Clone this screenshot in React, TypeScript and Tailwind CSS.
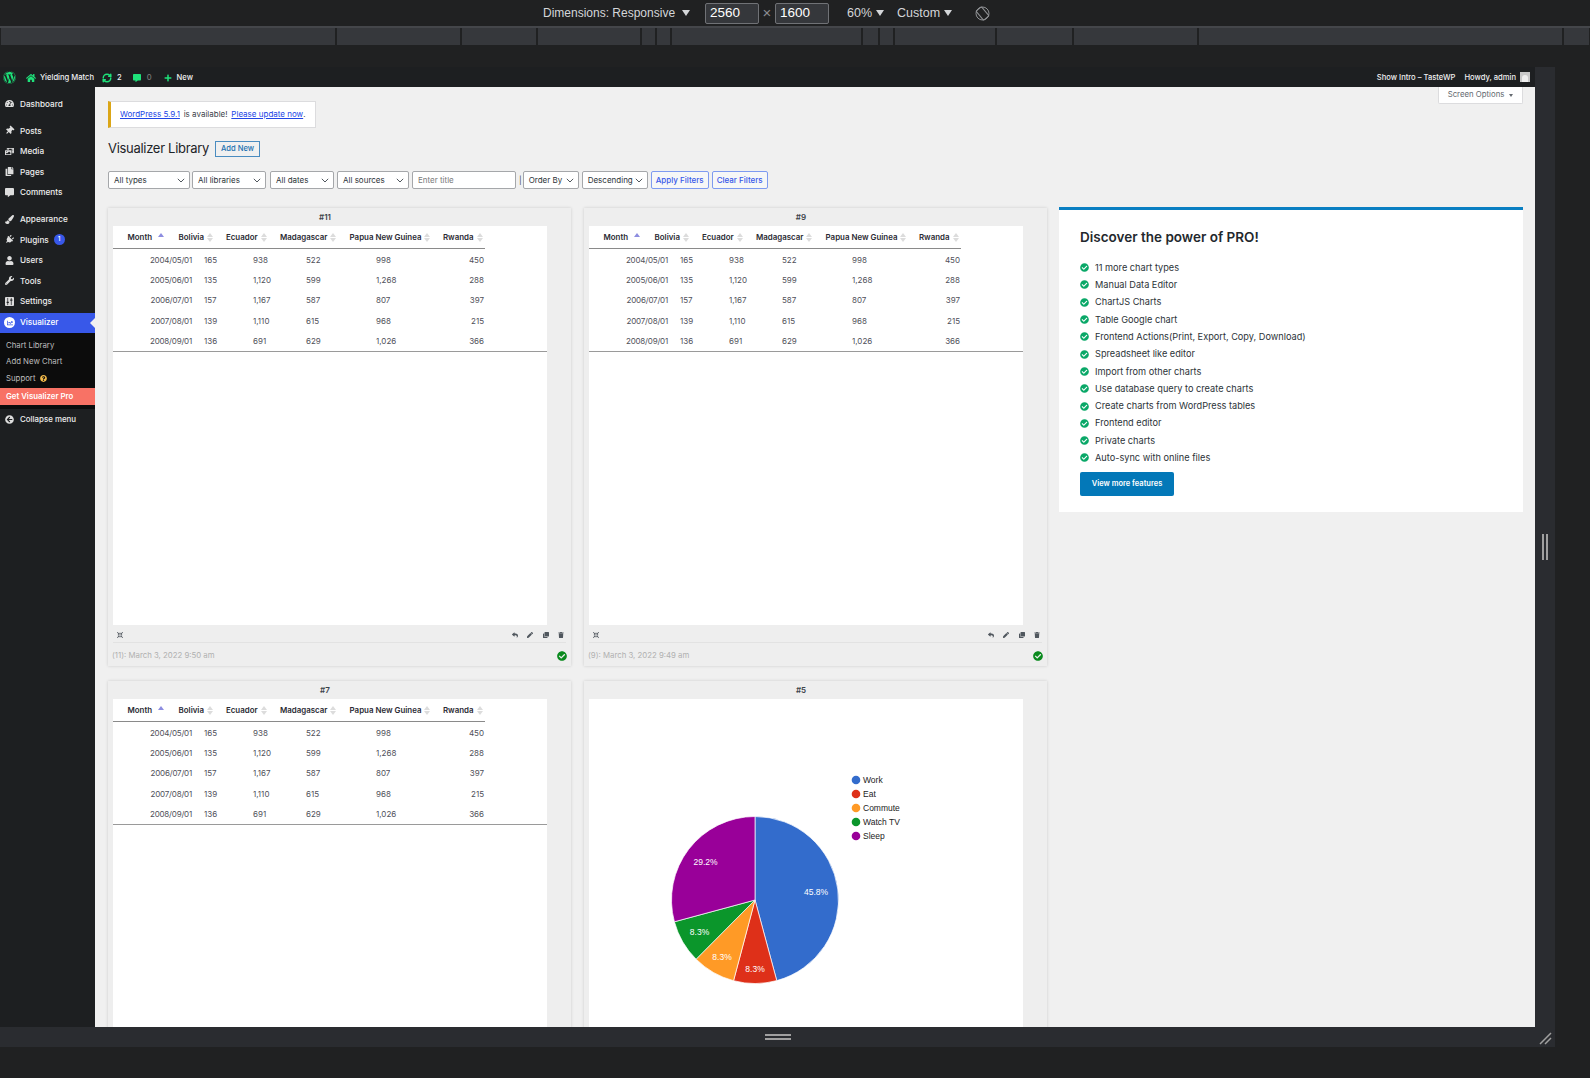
import React from "react";
import {
    FaWordpress,
    FaHome,
    FaCommentAlt,
    FaPlus,
    FaTachometerAlt,
    FaThumbtack,
    FaPhotoVideo,
    FaCopy,
    FaPaintBrush,
    FaPlug,
    FaUser,
    FaWrench,
    FaChartLine,
    FaArrowCircleLeft,
    FaQuestionCircle,
    FaCheckCircle,
    FaTrash,
    FaPen,
    FaClone,
    FaReply,
    FaCompressArrowsAlt,
} from "react-icons/fa";
import { RefreshCw } from "lucide-react";

const inter = "font-['Inter',sans-serif]";

const rulerWidths = [336, 125, 76, 104, 15, 15, 191, 17, 15, 102, 77, 125, 365, 27];

const SettingsIcon = ({ className }: { className?: string }) => (
    <svg viewBox="0 0 10 10" className={className}>
        <rect x="0" y="0" width="10" height="10" rx="1" fill="currentColor" />
        <path d="M3 1v8M7 1v8" stroke="#1d1f21" strokeWidth="0.8" />
        <path d="M1.8 6h2.4M5.8 3.5h2.4" stroke="#1d1f21" strokeWidth="1.2" />
    </svg>
);

const PostsIcon = ({ className }: { className?: string }) => <FaThumbtack className={`rotate-45 ${className}`} />;
const PluginsIcon = ({ className }: { className?: string }) => <FaPlug className={`rotate-45 ${className}`} />;

const menuTop = [
    { label: "Posts", Icon: PostsIcon },
    { label: "Media", Icon: FaPhotoVideo },
    { label: "Pages", Icon: FaCopy },
    { label: "Comments", Icon: FaCommentAlt },
];

const menuMid = [
    { label: "Appearance", Icon: FaPaintBrush },
    { label: "Plugins", Icon: PluginsIcon },
    { label: "Users", Icon: FaUser },
    { label: "Tools", Icon: FaWrench },
    { label: "Settings", Icon: SettingsIcon },
];

const selects = [
    { label: "All types", width: "w-[82px] mr-[2px]" },
    { label: "All libraries", width: "w-[74px] mr-[4px]" },
    { label: "All dates", width: "w-[64px] mr-[3px]" },
    { label: "All sources", width: "w-[72px] mr-[3px]" },
];

const columns = [
    { label: "Month", x: "w-[65.6px] pl-[14.5px]", sorted: true },
    { label: "Bolivia", x: "w-[47.4px]" },
    { label: "Ecuador", x: "w-[54px]" },
    { label: "Madagascar", x: "w-[69.6px]" },
    { label: "Papua New Guinea", x: "w-[93.4px]" },
    { label: "Rwanda", x: "w-[42px]" },
];

const rows = [
    ["2004/05/01", "165", "938", "522", "998", "450"],
    ["2005/06/01", "135", "1,120", "599", "1,268", "288"],
    ["2006/07/01", "157", "1,167", "587", "807", "397"],
    ["2007/08/01", "139", "1,110", "615", "968", "215"],
    ["2008/09/01", "136", "691", "629", "1,026", "366"],
];

const features = [
    "11 more chart types",
    "Manual Data Editor",
    "ChartJS Charts",
    "Table Google chart",
    "Frontend Actions(Print, Export, Copy, Download)",
    "Spreadsheet like editor",
    "Import from other charts",
    "Use database query to create charts",
    "Create charts from WordPress tables",
    "Frontend editor",
    "Private charts",
    "Auto-sync with online files",
];

const slices = [
    { value: 45.8, color: "#336ccc" },
    { value: 8.33, color: "#de3019" },
    { value: 8.33, color: "#ff9a26" },
    { value: 8.33, color: "#0b962b" },
    { value: 29.2, color: "#990099" },
];

const legend = [
    { label: "Work", color: "#336ccc" },
    { label: "Eat", color: "#de3019" },
    { label: "Commute", color: "#ff9a26" },
    { label: "Watch TV", color: "#0b962b" },
    { label: "Sleep", color: "#990099" },
];

const pieLabels = [
    { text: "45.8%", x: 816, y: 895 },
    { text: "8.3%", x: 755, y: 972 },
    { text: "8.3%", x: 722, y: 960 },
    { text: "8.3%", x: 699.5, y: 935 },
    { text: "29.2%", x: 705.5, y: 865 },
];

// chart coordinates are page pixels, shifted into the white panel
const originX = 589;
const originY = 699;

const PieChart = () => {
    const cx = 755 - originX;
    const cy = 900 - originY;
    const r = 83.5;
    const total = slices.reduce((sum, s) => sum + s.value, 0);
    let angle = 0;
    return (
        <svg width="435" height="327" className="block">
            {slices.map((s) => {
                const start = angle;
                angle += (s.value / total) * Math.PI * 2;
                const x1 = cx + r * Math.sin(start);
                const y1 = cy - r * Math.cos(start);
                const x2 = cx + r * Math.sin(angle);
                const y2 = cy - r * Math.cos(angle);
                const large = angle - start > Math.PI ? 1 : 0;
                return (
                    <path
                        key={s.color}
                        d={`M${cx} ${cy}L${x1} ${y1}A${r} ${r} 0 ${large} 1 ${x2} ${y2}Z`}
                        fill={s.color}
                        stroke="#fff"
                        strokeWidth="0.7"
                    />
                );
            })}
            {pieLabels.map((l, i) => (
                <text
                    key={i}
                    x={l.x - originX}
                    y={l.y - originY}
                    textAnchor="middle"
                    fill="#fff"
                    fontSize="8.5"
                    fontFamily="Liberation Sans, sans-serif"
                >
                    {l.text}
                </text>
            ))}
            {legend.map((l, i) => (
                <g key={l.label}>
                    <circle cx={856 - originX} cy={780 - originY + i * 14} r="4.3" fill={l.color} />
                    <text
                        x={863 - originX}
                        y={783 - originY + i * 14}
                        fill="#222"
                        fontSize="8.5"
                        fontFamily="Liberation Sans, sans-serif"
                    >
                        {l.label}
                    </text>
                </g>
            ))}
        </svg>
    );
};

const SortArrows = ({ active }: { active?: boolean }) =>
    active ? (
        <span className="ml-[6px] h-0 w-0 -translate-y-[3px] border-x-[3px] border-b-[4px] border-x-transparent border-b-[#8d8de0]" />
    ) : (
        <span className="ml-[3px] inline-flex flex-col gap-[1px]">
            <span className="h-0 w-0 border-x-[3px] border-b-[4px] border-x-transparent border-b-[#dcdcdc]" />
            <span className="h-0 w-0 border-x-[3px] border-t-[4px] border-x-transparent border-t-[#dcdcdc]" />
        </span>
    );

const DataTable = () => (
    <div className={inter}>
        <div className="flex h-[23px] w-[372px] items-center border-b border-[#8a8a8a] pt-[2px] text-[7.9px] font-semibold text-[#2a2a33]">
            {columns.map((c) => (
                <div key={c.label} className={`flex shrink-0 items-center whitespace-nowrap ${c.x}`}>
                    {c.label}
                    <SortArrows active={c.sorted} />
                </div>
            ))}
        </div>
        <div className="h-[103px] border-b border-[#9a9a9a] pt-[0.5px] text-[8px] text-[#50505a]">
            {rows.map((r) => (
                <div key={r[0]} className="flex h-[20.3px] w-[372px] items-center">
                    <div className="w-[79px] shrink-0 text-right tracking-[-0.2px]">{r[0]}</div>
                    <div className="ml-[12px] w-[49px] shrink-0">{r[1]}</div>
                    <div className="w-[53px] shrink-0">{r[2]}</div>
                    <div className="w-[70px] shrink-0">{r[3]}</div>
                    <div className="w-[60px] shrink-0">{r[4]}</div>
                    <div className="w-[48px] shrink-0 text-right">{r[5]}</div>
                </div>
            ))}
        </div>
    </div>
);

const ChartCard = ({ id, date, table }: { id: string; date?: string; table?: boolean }) => (
    <div className={`w-[463px] shrink-0 bg-[#eeeeee] shadow-[0_0_3px_rgba(0,0,0,0.15)] ${inter}`}>
        <div className="flex h-[18px] items-center justify-center pr-[29px] text-[8px] font-semibold text-[#3c434a]">
            {id}
        </div>
        <div className="mx-[5px] h-[399px] w-[434px] overflow-hidden bg-white">
            {table ? <DataTable /> : <PieChart />}
        </div>
        {date && (
            <>
                <div className="mx-[5px] flex h-[18px] items-center justify-between border-b border-[#e2e2e2] pb-[1px] pl-[4px] pr-[2px] pt-[3px] text-[#50575e]">
                    <FaCompressArrowsAlt className="h-[6px] w-[6px]" />
                    <div className="flex items-center gap-[9.5px]">
                        <FaReply className="h-[6px] w-[6px]" />
                        <FaPen className="h-[6px] w-[6px]" />
                        <FaClone className="h-[6px] w-[6px]" />
                        <FaTrash className="h-[6px] w-[6px]" />
                    </div>
                </div>
                <div className="ml-[4px] mr-[5px] flex h-[23px] items-center justify-between pt-[3px] text-[7.8px] text-[#b0b0b0]">
                    <span>{date}</span>
                    <FaCheckCircle className="mr-[-1px] h-[10px] w-[10px] text-[#0a8a1e]" />
                </div>
            </>
        )}
    </div>
);

const MenuRow = ({
    label,
    Icon,
    badge,
}: {
    label: string;
    Icon: React.ComponentType<{ className?: string }>;
    badge?: boolean;
}) => (
    <div className="flex h-[20.5px] items-center pl-[5px]">
        <Icon className="mr-[6px] h-[9px] w-[9px] text-[#dddddd]" />
        {label}
        {badge && (
            <span className="ml-[5px] flex h-[11px] w-[11px] items-center justify-center rounded-full bg-[#3858e9] text-[6.5px] text-white">
                1
            </span>
        )}
    </div>
);

const Sidebar = () => (
    <aside className={`h-full w-[95px] shrink-0 bg-[#1d1f21] text-[8.2px] font-medium text-[#eeeeee] ${inter}`}>
        <div className="pb-[1px] pt-[6.5px]">
            <MenuRow label="Dashboard" Icon={FaTachometerAlt} />
            <div className="h-[6.5px]" />
            {menuTop.map((m) => (
                <MenuRow key={m.label} {...m} />
            ))}
            <div className="h-[6.5px]" />
            {menuMid.map((m) => (
                <MenuRow key={m.label} label={m.label} Icon={m.Icon} badge={m.label === "Plugins"} />
            ))}
        </div>
        <div className="relative flex h-[20px] items-center bg-[#3858e9] pl-[20px] text-white">
            <span className="absolute left-[4px] flex h-[11px] w-[11px] items-center justify-center rounded-full bg-white">
                <FaChartLine className="h-[6px] w-[6px] text-[#3858e9]" />
            </span>
            Visualizer
            <span className="absolute right-0 h-0 w-0 border-y-[5px] border-r-[5px] border-y-transparent border-r-[#f0f0f1]" />
        </div>
        <div className="h-[76px] bg-[#0c0c0c] pt-[5px] text-[7.8px] font-normal text-[#bdbdbd]">
            <div className="flex h-[16.5px] items-center pl-[6px]">Chart Library</div>
            <div className="flex h-[16.5px] items-center pl-[6px]">Add New Chart</div>
            <div className="flex h-[16.5px] items-center gap-[5px] pl-[6px]">
                Support
                <FaQuestionCircle className="h-[7px] w-[7px] text-[#f0b849]" />
            </div>
            <div className="mt-[1px] flex h-[17px] items-center bg-[#f87265] pl-[6px] font-semibold text-white">
                Get Visualizer Pro
            </div>
        </div>
        <div className="flex h-[22px] items-center pl-[5px] text-[7.9px]">
            <FaArrowCircleLeft className="mr-[6px] h-[9px] w-[9px] text-[#dddddd]" />
            Collapse menu
        </div>
    </aside>
);

const AdminBar = () => (
    <div className={`flex h-[20px] shrink-0 items-center justify-between bg-[#1d1f21] pr-[5px] pt-[1px] text-[7.6px] font-medium text-[#f0f0f1] ${inter}`}>
        <div className="flex items-center">
            <FaWordpress className="ml-[3px] h-[13px] w-[13px] text-[#1ee27a]" />
            <FaHome className="ml-[10px] h-[10px] w-[10px] text-[#1ee27a]" />
            <span className="ml-[4px]">Yielding Match</span>
            <RefreshCw className="ml-[8px] h-[10px] w-[10px] text-[#1ee27a]" strokeWidth={3.5} />
            <span className="ml-[5px]">2</span>
            <FaCommentAlt className="ml-[11px] h-[8px] w-[8px] text-[#1ee27a]" />
            <span className="ml-[6px] text-[#777]">0</span>
            <FaPlus className="ml-[12px] h-[8px] w-[8px] text-[#1ee27a]" />
            <span className="ml-[5px]">New</span>
        </div>
        <div className="flex items-center">
            <span>Show Intro – TasteWP</span>
            <span className="ml-[9px]">Howdy, admin</span>
            <span className="ml-[4px] flex h-[10px] w-[10px] items-end justify-center bg-[#c8c8c8]">
                <span className="h-[7px] w-[6px] rounded-t-full bg-[#eeeeee]" />
            </span>
        </div>
    </div>
);

const FilterSelect = ({ label, width }: { label: string; width: string }) => (
    <div
        className={`flex h-full shrink-0 items-center justify-between rounded-[2px] border border-[#a5a7aa] bg-white pl-[5px] pr-[4px] text-[#2c3338] ${width}`}
    >
        {label}
        <svg width="8" height="5" viewBox="0 0 8 5" fill="none" stroke="#50575e" strokeWidth="1">
            <path d="M0.8 0.8 4 4 7.2 0.8" />
        </svg>
    </div>
);

const Content = () => (
    <main className={`relative flex-1 overflow-hidden bg-[#f0f0f0] pl-[13px] pr-[12px] pt-[14px] text-[#3c434a] ${inter}`}>
        <div className="absolute right-[12px] top-0 flex h-[17px] w-[85px] items-center justify-center gap-[5px] rounded-b-[2px] border border-t-0 border-[#dcdcde] bg-white text-[7.8px] text-[#646970]">
            Screen Options
            <span className="h-0 w-0 border-x-[2.5px] border-t-[3.5px] border-x-transparent border-t-[#646970]" />
        </div>
        <div className="flex h-[27px] w-[208px] items-center border border-l-[3px] border-[#dcdcde] border-l-[#dba617] bg-white pb-[1px] pl-[9px] text-[8px]">
            <span className="text-[#2145e6] underline">WordPress 5.9.1</span>
            <span className="mx-[1.5px]">&nbsp;is available!&nbsp;</span>
            <span className="text-[#2145e6] underline">Please update now</span>.
        </div>
        <div className="mt-[12px] flex h-[18px] items-center">
            <h1 className="text-[13px] tracking-[-0.3px] text-[#1d2327]">Visualizer Library</h1>
            <span className="ml-[6px] flex h-[16px] w-[45px] items-center justify-center border border-[#4a8cc0] text-[7.6px] font-medium text-[#2271b1]">
                Add New
            </span>
        </div>
        <div className="mt-[13px] flex h-[18px] items-center text-[8px]">
            {selects.map((s) => (
                <FilterSelect key={s.label} label={s.label} width={s.width} />
            ))}
            <div className="mr-[3px] flex h-full w-[104px] items-center rounded-[2px] border border-[#a5a7aa] bg-white pl-[5px] text-[#7a7a7a]">
                Enter title
            </div>
            <span className="mr-[1px]">|</span>
            <FilterSelect label="Order By" width="w-[56px] mr-[3px]" />
            <FilterSelect label="Descending" width="w-[66px] mr-[3px]" />
            <span className="mr-[3px] flex h-full w-[58px] items-center justify-center rounded-[2px] border border-[#7e9bf0] bg-[#f6f7f7] font-medium text-[#3858e9]">
                Apply Filters
            </span>
            <span className="flex h-full w-[56px] items-center justify-center rounded-[2px] border border-[#7e9bf0] bg-[#f6f7f7] font-medium text-[#3858e9]">
                Clear Filters
            </span>
        </div>
        <div className="mt-[19px] flex items-start gap-[12px]">
            <div className="grid grid-cols-[463px_463px] gap-x-[13px] gap-y-[15px]">
                <ChartCard id="#11" date="(11): March 3, 2022 9:50 am" table />
                <ChartCard id="#9" date="(9): March 3, 2022 9:49 am" table />
                <ChartCard id="#7" table />
                <ChartCard id="#5" />
            </div>
            <div className="-mt-[1px] h-[305px] w-[464px] border-t-[3px] border-[#0a7fc2] bg-white pl-[21px] pt-[18px]">
                <h2 className="text-[13.5px] font-semibold leading-[18px] text-[#23282d]">Discover the power of PRO!</h2>
                <ul className="mt-[13px] text-[9.2px] text-[#2c3338]">
                    {features.map((f) => (
                        <li key={f} className="flex h-[17.3px] items-center">
                            <FaCheckCircle className="mr-[6px] h-[9px] w-[9px] text-[#0aa868]" />
                            {f}
                        </li>
                    ))}
                </ul>
                <div className="mt-[5px] flex h-[24px] w-[94px] items-center justify-center rounded-[2px] bg-[#0378b8] text-[7.5px] font-semibold text-white">
                    View more features
                </div>
            </div>
        </div>
    </main>
);

const Caret = ({ className }: { className: string }) => (
    <span className={`h-0 w-0 border-x-[4px] border-t-[6px] border-x-transparent border-t-[#d4d6d9] ${className}`} />
);

const Toolbar = () => (
    <div className="flex h-[26px] shrink-0 items-center font-['Liberation_Sans',sans-serif] text-[12.5px] text-[#d4d6d9]">
        <span className="ml-[543px] w-[132px] whitespace-nowrap text-[12px]">Dimensions: Responsive</span>
        <Caret className="ml-[7px]" />
        <div className="ml-[15px] flex h-[21px] w-[54px] items-center rounded-[2px] border border-[#707276] bg-[#35373b] pl-[4px] text-[13.5px] text-white">
            2560
        </div>
        <span className="w-[16px] text-center text-[15px] text-[#8a8c90]">×</span>
        <div className="flex h-[21px] w-[54px] items-center rounded-[2px] border border-[#707276] bg-[#35373b] pl-[4px] text-[13.5px] text-white">
            1600
        </div>
        <span className="ml-[18px] w-[25px]">60%</span>
        <Caret className="ml-[4px]" />
        <span className="ml-[13px] w-[43px]">Custom</span>
        <Caret className="ml-[4px]" />
        <svg className="ml-[23px]" width="15" height="15" viewBox="0 0 15 15" fill="none" stroke="#8f9194" strokeWidth="1">
            <circle cx="7.5" cy="7.5" r="6.5" />
            <rect x="4" y="1.5" width="7" height="12" rx="1" transform="rotate(-40 7.5 7.5)" />
        </svg>
    </div>
);

const App = () => {
    return (
        <div className="flex h-[1078px] w-[1590px] flex-col overflow-hidden bg-[#202122]">
            <Toolbar />
            <div className="h-[2px] shrink-0 bg-[#44464a]" />
            <div className="flex h-[17px] shrink-0 gap-[2px] pl-[1px]">
                {rulerWidths.map((w, i) => (
                    <div key={i} className="bg-[#36383c]" style={{ width: w - 2 }} />
                ))}
            </div>
            <div className="h-[22px] shrink-0" />
            <div className="flex h-[960px] shrink-0">
                <div className="flex w-[1535px] shrink-0 flex-col">
                    <AdminBar />
                    <div className="flex min-h-0 flex-1">
                        <Sidebar />
                        <Content />
                    </div>
                </div>
                <div className="flex w-[20px] shrink-0 items-center justify-center gap-[2px] bg-[#2a2c30]">
                    <span className="h-[26px] w-[2px] bg-[#a0a0a0]" />
                    <span className="h-[26px] w-[2px] bg-[#a0a0a0]" />
                </div>
            </div>
            <div className="relative flex h-[20px] w-[1555px] shrink-0 flex-col items-center justify-center gap-[2px] bg-[#2a2c30]">
                <span className="h-[2px] w-[26px] bg-[#a0a0a0]" />
                <span className="h-[2px] w-[26px] bg-[#a0a0a0]" />
                <svg className="absolute left-[1539px] top-[5px]" width="13" height="13" viewBox="0 0 13 13" stroke="#a0a0a0" strokeWidth="1.5">
                    <path d="M1 12 12 1M6 12 12 6" />
                </svg>
            </div>
        </div>
    );
};

export default App;
